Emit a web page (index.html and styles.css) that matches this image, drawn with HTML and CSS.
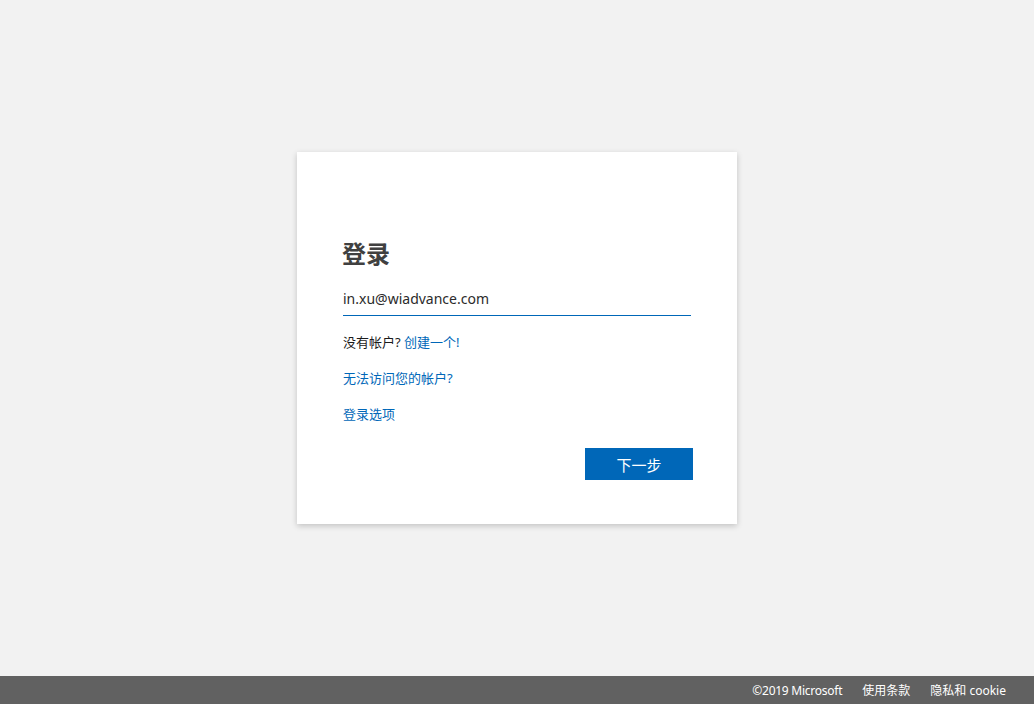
FILE: index.html
```html
<!DOCTYPE html>
<html lang="zh-CN">
<head>
<meta charset="utf-8">
<title>登录</title>
<link rel="stylesheet" href="styles.css">
</head>
<body>
<div class="page">
  <main class="main">
    <div class="card">
      <div class="logo-space"></div>
      <h1 class="title">登录</h1>
      <div class="field">
        <input class="input" type="text" value="in.xu@wiadvance.com">
      </div>
      <div class="row">没有帐户? <a class="link" href="#">创建一个!</a></div>
      <div class="row"><a class="link" href="#">无法访问您的帐户?</a></div>
      <div class="row"><a class="link" href="#">登录选项</a></div>
      <div class="actions">
        <button class="btn" type="button">下一步</button>
      </div>
    </div>
  </main>
  <footer class="footer">
    <span class="foot-item">©2019 Microsoft</span>
    <a class="foot-item" href="#">使用条款</a>
    <a class="foot-item" href="#">隐私和 cookie</a>
  </footer>
</div>
</body>
</html>
```
FILE: styles.css
```css
* { box-sizing: border-box; }
html, body {
  margin: 0;
  padding: 0;
  height: 100%;
}
body {
  background: #f2f2f2;
  font-family: "Noto Sans", "Noto Sans CJK SC", sans-serif;
  color: #1b1b1b;
}
.page {
  height: 100vh;
  display: flex;
  flex-direction: column;
}
.main {
  flex: 1;
  display: flex;
  align-items: center;
  justify-content: center;
}
.card {
  width: 440px;
  background: #fff;
  padding: 44px;
  box-shadow: 0 2px 6px rgba(0, 0, 0, 0.2);
  display: flex;
  flex-direction: column;
}
.logo-space {
  height: 44px;
}
.title {
  margin: 0 0 12px 0;
  font-size: 24px;
  line-height: 28px;
  font-weight: 700;
  color: #404040;
  padding-left: 1px;
}
.field {
  margin-bottom: 16px;
  padding: 0 2px;
}
.input {
  display: block;
  width: 100%;
  height: 36px;
  border: none;
  border-bottom: 1px solid #0067b8;
  outline: none;
  padding: 6px 0 4px 0;
  font-family: "Noto Sans", "Noto Sans CJK SC", sans-serif;
  font-size: 14px;
  color: #2b2b2b;
  background: transparent;
}
.row {
  font-size: 13px;
  line-height: 20px;
  margin-bottom: 16px;
  padding-left: 2px;
  color: #1b1b1b;
}
.row:last-of-type { margin-bottom: 0; }
.link {
  color: #0067b8;
  text-decoration: none;
}
.actions {
  margin-top: 8px;
  display: flex;
  justify-content: flex-end;
}
.btn {
  width: 108px;
  height: 32px;
  background: #0067b8;
  border: none;
  color: #fff;
  font-family: "Noto Sans CJK SC", sans-serif;
  font-size: 15px;
  padding: 0;
}
.footer {
  height: 28px;
  background: #616161;
  display: flex;
  align-items: center;
  justify-content: flex-end;
  padding-right: 28px;
}
.foot-item {
  color: #fff;
  font-size: 12px;
  text-decoration: none;
  margin-left: 20px;
  font-family: "Noto Sans", "Noto Sans CJK SC", sans-serif;
}
.foot-item:first-child {
  letter-spacing: -0.25px;
}
```
